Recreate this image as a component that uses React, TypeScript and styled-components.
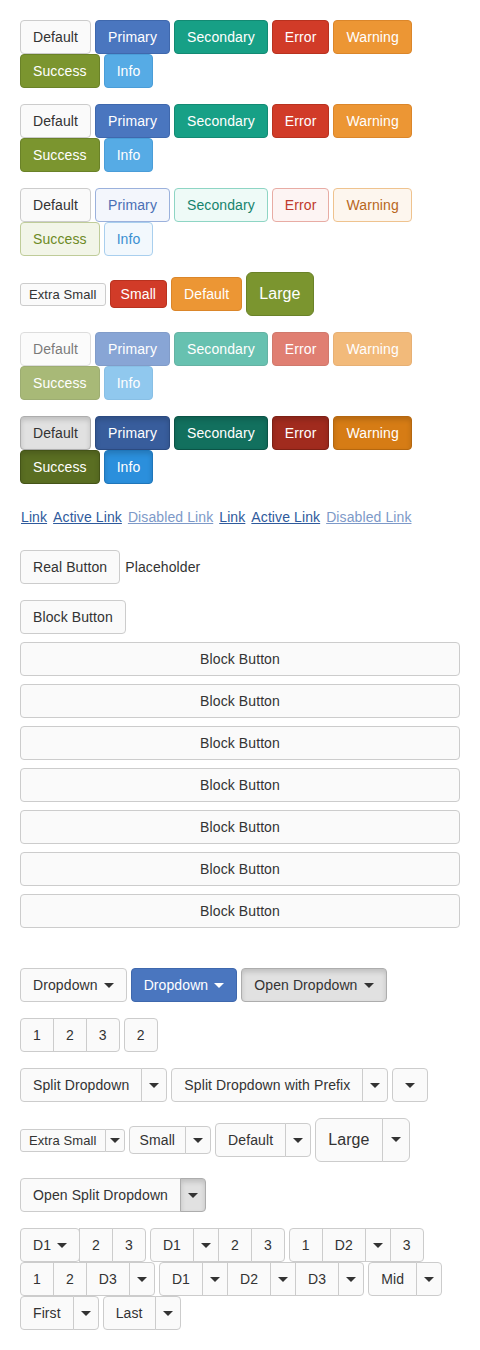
import React from 'react'
import styled, { createGlobalStyle, css } from 'styled-components'

// -------------------------------------------------------- //
//                          Palette                         //
// -------------------------------------------------------- //

type Variant = 'default' | 'primary' | 'secondary' | 'error' | 'warning' | 'success' | 'info'
type Look = 'normal' | 'light' | 'disabled' | 'active'
type Size = 'xs' | 'sm' | 'md' | 'lg'

interface Swatch {
  bg: string
  border: string
  text: string
  activeBg: string
  activeBorder: string
  lightBg: string
  lightBorder: string
  lightText: string
}

const palette: Record<Variant, Swatch> = {
  default: {
    bg: '#fafafa', border: '#cccccc', text: '#333333',
    activeBg: '#e1e1e1', activeBorder: '#adadad',
    lightBg: '#fafafa', lightBorder: '#cccccc', lightText: '#333333'
  },
  primary: {
    bg: '#4a76bf', border: '#3f68ad', text: '#ffffff',
    activeBg: '#385d9c', activeBorder: '#2b4a80',
    lightBg: '#f3f6fc', lightBorder: '#9bb1dc', lightText: '#4a6fb5'
  },
  secondary: {
    bg: '#17a086', border: '#138a73', text: '#ffffff',
    activeBg: '#12705e', activeBorder: '#0b5346',
    lightBg: '#eefaf7', lightBorder: '#8ed5c4', lightText: '#16836d'
  },
  error: {
    bg: '#d13b28', border: '#b8321f', text: '#ffffff',
    activeBg: '#a12b1e', activeBorder: '#7d2015',
    lightBg: '#fdf4f3', lightBorder: '#e8aca4', lightText: '#c0392b'
  },
  warning: {
    bg: '#ec9634', border: '#db862a', text: '#ffffff',
    activeBg: '#d67c15', activeBorder: '#b4670f',
    lightBg: '#fdf6ee', lightBorder: '#efc38f', lightText: '#b8661c'
  },
  success: {
    bg: '#7b952f', border: '#6a8228', text: '#ffffff',
    activeBg: '#5a6e22', activeBorder: '#445418',
    lightBg: '#f2f5e8', lightBorder: '#bfcc99', lightText: '#6c8a25'
  },
  info: {
    bg: '#56abe5', border: '#4a9dd8', text: '#ffffff',
    activeBg: '#2b8fdc', activeBorder: '#1f76ba',
    lightBg: '#f2f8fd', lightBorder: '#a9cfee', lightText: '#3a8fd1'
  }
}

const sizes: Record<Size, { font: number, line: number, padY: number, padX: number, caretPad: number, radius: number }> = {
  xs: { font: 13, line: 19, padY: 1, padX: 8, caretPad: 4, radius: 3 },
  sm: { font: 14, line: 18, padY: 4, padX: 10, caretPad: 7, radius: 4 },
  md: { font: 14, line: 20, padY: 6, padX: 12, caretPad: 7, radius: 4 },
  lg: { font: 16, line: 22, padY: 10, padX: 12, caretPad: 8, radius: 6 }
}

const variants: Variant[] = ['default', 'primary', 'secondary', 'error', 'warning', 'success', 'info']
const label = (v: Variant) => v.charAt(0).toUpperCase() + v.slice(1)

// -------------------------------------------------------- //
//                       Main Component                     //
// -------------------------------------------------------- //

export default function App() {
  return (
    <>
      <GlobalStyle />
      <Page>
        <Section>
          {variants.map(v => <Btn key={v} $variant={v}>{label(v)}</Btn>)}
        </Section>
        <Section>
          {variants.map(v => <Btn key={v} $variant={v}>{label(v)}</Btn>)}
        </Section>
        <Section>
          {variants.map(v => <Btn key={v} $variant={v} $look='light'>{label(v)}</Btn>)}
        </Section>
        <Section>
          <Btn $size='xs'>Extra Small</Btn>
          <Btn $size='sm' $variant='error'>Small</Btn>
          <Btn $variant='warning'>Default</Btn>
          <Btn $size='lg' $variant='success'>Large</Btn>
        </Section>
        <Section>
          {variants.map(v => <Btn key={v} $variant={v} $look='disabled'>{label(v)}</Btn>)}
        </Section>
        <Section>
          {variants.map(v => <Btn key={v} $variant={v} $look='active'>{label(v)}</Btn>)}
        </Section>

        <Section>
          <LinkBtn>Link</LinkBtn>
          <LinkBtn>Active Link</LinkBtn>
          <LinkBtn $disabled>Disabled Link</LinkBtn>
          <LinkBtn>Link</LinkBtn>
          <LinkBtn>Active Link</LinkBtn>
          <LinkBtn $disabled>Disabled Link</LinkBtn>
        </Section>

        <Section>
          <Btn>Real Button</Btn>
          <Plain>Placeholder</Plain>
        </Section>

        <Section $bottom={8}>
          <Btn>Block Button</Btn>
        </Section>
        <BlockStack>
          {Array.from({ length: 7 }).map((_, i) => <BlockBtn key={i}>Block Button</BlockBtn>)}
        </BlockStack>

        <Section>
          <Btn>Dropdown<Caret $gap /></Btn>
          <Btn $variant='primary'>Dropdown<Caret $gap $light /></Btn>
          <Btn $look='active'>Open Dropdown<Caret $gap /></Btn>
        </Section>

        <Section>
          <Group>
            <Btn>1</Btn>
            <Btn>2</Btn>
            <Btn>3</Btn>
          </Group>
          <Btn>2</Btn>
        </Section>

        <Section>
          <Split text='Split Dropdown' />
          <Split text='Split Dropdown with Prefix' />
          <Btn><Caret /></Btn>
        </Section>

        <Section>
          <Split text='Extra Small' size='xs' />
          <Split text='Small' size='sm' />
          <Split text='Default' />
          <Split text='Large' size='lg' />
        </Section>

        <Section>
          <Split text='Open Split Dropdown' open />
        </Section>

        <Section $bottom={0}>
          <Group>
            <Group>
              <Btn>D1<Caret $gap /></Btn>
            </Group>
            <Btn>2</Btn>
            <Btn>3</Btn>
          </Group>
          <Group>
            <Btn>D1</Btn>
            <CaretBtn><Caret /></CaretBtn>
            <Btn>2</Btn>
            <Btn>3</Btn>
          </Group>
          <Group>
            <Btn>1</Btn>
            <Btn>D2</Btn>
            <CaretBtn><Caret /></CaretBtn>
            <Btn>3</Btn>
          </Group>
          <Group>
            <Btn>1</Btn>
            <Btn>2</Btn>
            <Btn>D3</Btn>
            <CaretBtn><Caret /></CaretBtn>
          </Group>
          <Group>
            <Btn>D1</Btn>
            <CaretBtn><Caret /></CaretBtn>
            <Btn>D2</Btn>
            <CaretBtn><Caret /></CaretBtn>
            <Btn>D3</Btn>
            <CaretBtn><Caret /></CaretBtn>
          </Group>
          <Split text='Mid' />
          <Split text='First' />
          <Split text='Last' />
        </Section>
      </Page>
    </>
  )
}

// -------------------------------------------------------- //
//                        Sub-Components                    //
// -------------------------------------------------------- //

interface SplitProps {
  text: string
  size?: Size
  open?: boolean
}

const Split = ({ text, size = 'md', open }: SplitProps) => (
  <Group $radius={sizes[size].radius}>
    <Btn $size={size}>{text}</Btn>
    <CaretBtn $size={size} $look={open ? 'active' : 'normal'}><Caret /></CaretBtn>
  </Group>
)

const Caret = ({ $light, $gap }: { $light?: boolean, $gap?: boolean }) => (
  <CaretSvg $gap={$gap} width='10' height='5' viewBox='0 0 10 5'>
    <polygon points='0,0 10,0 5,5' fill={$light ? '#ffffff' : '#333333'} />
  </CaretSvg>
)

// -------------------------------------------------------- //
//                           Styles                         //
// -------------------------------------------------------- //

const GlobalStyle = createGlobalStyle`
  body {
    margin: 0;
    background: #ffffff;
    font-family: "Liberation Sans", Arial, Helvetica, sans-serif;
    font-size: 14px;
    color: #333333;
  }
`

const Page = styled.div`
  padding: 20px;
`

interface SectionProps {
  $bottom?: number
}

const Section = styled.div<SectionProps>`
  display: flex;
  flex-wrap: wrap;
  align-items: center;
  column-gap: 4px;
  margin-bottom: ${p => p.$bottom ?? 16}px;
`

interface BtnProps {
  $variant?: Variant
  $look?: Look
  $size?: Size
}

const lookStyle = ({ $variant = 'default', $look = 'normal' }: BtnProps) => {
  const s = palette[$variant]
  if ($look === 'light') {
    return css`
      background: ${s.lightBg};
      border-color: ${s.lightBorder};
      color: ${s.lightText};
    `
  }
  if ($look === 'active') {
    return css`
      background: ${s.activeBg};
      border-color: ${s.activeBorder};
      color: ${s.text};
      box-shadow: inset 0 3px 5px rgba(0, 0, 0, 0.15);
      position: relative;
      z-index: 1;
    `
  }
  return css`
    background: ${s.bg};
    border-color: ${s.border};
    color: ${s.text};
    ${$look === 'disabled' && css`opacity: 0.65;`}
  `
}

const Btn = styled.button<BtnProps>`
  display: inline-block;
  box-sizing: border-box;
  margin: 0;
  border: 1px solid;
  font-family: inherit;
  font-weight: 400;
  text-align: center;
  vertical-align: middle;
  white-space: nowrap;
  letter-spacing: 0.1px;
  cursor: pointer;
  ${p => {
    const z = sizes[p.$size ?? 'md']
    return css`
      font-size: ${z.font}px;
      line-height: ${z.line}px;
      padding: ${z.padY}px ${z.padX}px;
      border-radius: ${z.radius}px;
    `
  }}
  ${lookStyle}
`

const CaretBtn = styled(Btn)`
  ${p => {
    const z = sizes[p.$size ?? 'md']
    return css`
      padding-left: ${z.caretPad}px;
      padding-right: ${z.caretPad}px;
    `
  }}
`

const BlockBtn = styled(Btn)`
  display: block;
  width: 100%;
`

const BlockStack = styled.div`
  display: flex;
  flex-direction: column;
  gap: 8px;
  margin-bottom: 40px;
`

const CaretSvg = styled.svg<{ $gap?: boolean }>`
  display: inline-block;
  vertical-align: middle;
  position: relative;
  top: -1px;
  margin-left: ${p => (p.$gap ? 6 : 0)}px;
`

const Group = styled.div<{ $radius?: number }>`
  display: inline-flex;
  align-items: stretch;

  & > * {
    border-radius: 0;
  }
  & > * + * {
    margin-left: -1px;
  }
  & > *:first-child {
    border-top-left-radius: ${p => p.$radius ?? 4}px;
    border-bottom-left-radius: ${p => p.$radius ?? 4}px;
  }
  & > *:last-child {
    border-top-right-radius: ${p => p.$radius ?? 4}px;
    border-bottom-right-radius: ${p => p.$radius ?? 4}px;
  }
`

const LinkBtn = styled.a<{ $disabled?: boolean }>`
  display: inline-block;
  padding: 6px 0;
  border: 1px solid transparent;
  line-height: 20px;
  font-size: 14px;
  letter-spacing: 0.1px;
  text-decoration: underline;
  cursor: pointer;
  color: ${p => (p.$disabled ? '#7d99c8' : '#2f5a9c')};
`

const Plain = styled.span`
  line-height: 20px;
  margin-left: 1px;
  letter-spacing: 0.1px;
`
